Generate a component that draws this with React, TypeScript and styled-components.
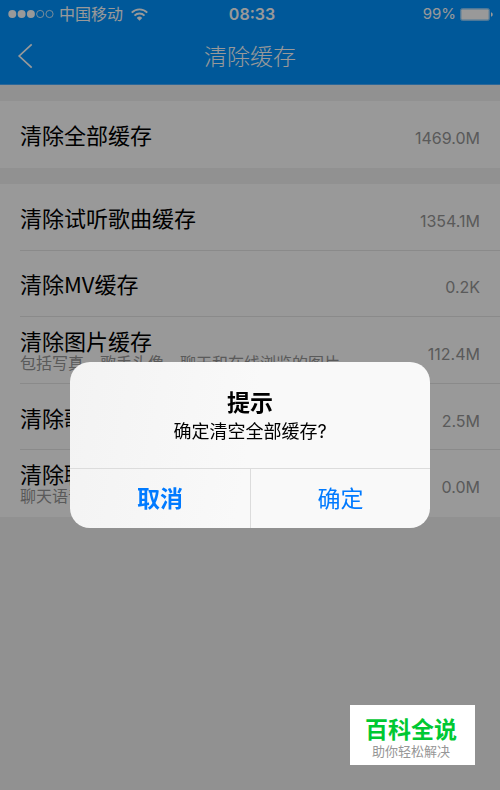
import React from "react";
import styled, { createGlobalStyle } from "styled-components";

const GlobalStyle = createGlobalStyle`
  * { box-sizing: border-box; }
  body {
    margin: 0;
    background: #f2f2f2;
    font-family: Inter, "Noto Sans CJK SC", sans-serif;
    color: #000;
  }
  button { font: inherit; border: 0; background: none; padding: 0; margin: 0; cursor: pointer; }
  h1, h2, p { margin: 0; font-weight: 400; }
`;

const Page = styled.div`
  min-height: 100vh;
`;

const Header = styled.header`
  background: #0093ff;
  color: #fff;
  border-bottom: 1px solid #49acff;
`;

const StatusBar = styled.div`
  display: grid;
  grid-template-columns: 1fr auto 1fr;
  align-items: center;
  height: 28px;
  padding: 0 7px 0 8px;
  font-size: 16px;
  line-height: 28px;
`;

const Carrier = styled.div`
  display: flex;
  align-items: center;
  gap: 5px;
`;

const CarrierName = styled.span`
  margin-right: 3px;
`;

const Clock = styled.time`
  padding-left: 3px;
  font-weight: 600;
  font-size: 16px;
`;

const Power = styled.div`
  display: flex;
  align-items: center;
  justify-content: flex-end;
  gap: 4px;
  font-size: 15px;
`;

const NavBar = styled.div`
  display: grid;
  grid-template-columns: 50px 1fr 50px;
  align-items: center;
  height: 56px;
`;

const BackButton = styled.button`
  display: flex;
  align-items: center;
  height: 56px;
  padding-left: 17px;
  color: inherit;
`;

const NavTitle = styled.h1`
  padding-top: 2px;
  font-size: 23px;
  line-height: 54px;
  font-weight: 300;
  text-align: center;
`;

const Content = styled.main`
  display: grid;
  gap: 16px;
  padding-top: 16px;
`;

const Group = styled.div<{ $minHeight: number }>`
  display: grid;
  grid-auto-rows: 1fr;
  min-height: ${(p) => p.$minHeight}px;
  background: #fff;
`;

const Row = styled.button`
  display: flex;
  padding-left: 20px;
  text-align: left;
  color: inherit;
`;

const RowBody = styled.span<{ $divided: boolean }>`
  flex: 1;
  display: flex;
  align-items: center;
  justify-content: space-between;
  padding-right: 20px;
  border-bottom: 1px solid ${(p) => (p.$divided ? "#e6e6e6" : "transparent")};
`;

const RowText = styled.span`
  display: grid;
`;

const Label = styled.span`
  font-family: "Noto Sans CJK SC", sans-serif;
  font-size: 22px;
  line-height: 26px;
`;

const Hint = styled.span`
  font-size: 16px;
  line-height: 20px;
  color: #969696;
`;

const Size = styled.span`
  padding-top: 8px;
  font-size: 16px;
  line-height: 20px;
  color: #969696;
`;

const Overlay = styled.div`
  position: fixed;
  inset: 0;
  display: flex;
  align-items: center;
  justify-content: center;
  padding: 100px 24px 0;
  background: rgba(0, 0, 0, 0.4);
`;

const Dialog = styled.section`
  width: 100%;
  max-width: 360px;
  overflow: hidden;
  border-radius: 20px;
  background: linear-gradient(100deg, #f3f3f3, #f9f9f9 50%);
`;

const DialogText = styled.div`
  padding: 26px 20px 22px;
  text-align: center;
`;

const DialogTitle = styled.h2`
  font-size: 23px;
  line-height: 30px;
  font-weight: 700;
`;

const DialogMessage = styled.p`
  font-size: 18px;
  line-height: 28px;
`;

const Actions = styled.div`
  display: grid;
  grid-template-columns: 1fr 1fr;
  border-top: 1px solid #dcdcdc;
`;

const Action = styled.button<{ $strong?: boolean }>`
  && {
    height: 59px;
    padding-top: 2px;
    color: #007aff;
    font-size: 23px;
    line-height: 57px;
    font-weight: ${(p) => (p.$strong ? 700 : 400)};
  }
  & + & {
    border-left: 1px solid #dcdcdc;
  }
`;

const Badge = styled.aside`
  position: fixed;
  right: 25px;
  bottom: 25px;
  width: 125px;
  padding: 12px 3px 6px 0;
  background: #fff;
  text-align: center;
`;

const BadgeName = styled.p`
  font-size: 23px;
  line-height: 26px;
  font-weight: 700;
  color: #00c832;
`;

const BadgeSlogan = styled.p`
  font-size: 13px;
  line-height: 16px;
  color: #969696;
`;

const SignalDots = () => (
  <svg width="46" height="10" viewBox="0 0 46 10" aria-hidden="true">
    {[4.3, 13.6, 22.9].map((x) => (
      <circle key={x} cx={x} cy="5" r="4" fill="#fff" />
    ))}
    {[32.2, 41.5].map((x) => (
      <circle key={x} cx={x} cy="5" r="3.6" fill="none" stroke="#fff" strokeWidth="0.8" />
    ))}
  </svg>
);

const WifiIcon = () => (
  <svg width="17" height="13" viewBox="0 0 16 12" fill="none" stroke="#fff" strokeWidth="1.8" aria-hidden="true">
    <path d="M0.7 4.2a10.3 10.3 0 0 1 14.6 0" />
    <path d="M3.3 7a6.6 6.6 0 0 1 9.4 0" />
    <path d="M8 11.8 5.4 9.2a3.7 3.7 0 0 1 5.2 0Z" fill="#fff" stroke="none" />
  </svg>
);

const BatteryIcon = () => (
  <svg width="33" height="13" viewBox="0 0 33 13" aria-hidden="true">
    <rect x="0.5" y="0.5" width="29" height="12" rx="2" fill="none" stroke="#fff" strokeOpacity="0.5" />
    <rect x="1.2" y="1.2" width="27.6" height="10.6" rx="1" fill="#fff" />
    <path d="M31 4.3c1.4.5 1.7 1.3 1.7 2.2s-.3 1.7-1.7 2.2Z" fill="#fff" />
  </svg>
);

const BackIcon = () => (
  <svg width="16" height="26" viewBox="0 0 16 26" fill="none" stroke="#fff" strokeWidth="1.7" aria-hidden="true">
    <path d="M14.7 1.3 2.2 13 14.7 24.7" />
  </svg>
);

type CacheItem = { label: string; size: string; hint?: string };

const groups: CacheItem[][] = [
  [{ label: "清除全部缓存", size: "1469.0M" }],
  [
    { label: "清除试听歌曲缓存", size: "1354.1M" },
    { label: "清除MV缓存", size: "0.2K" },
    { label: "清除图片缓存", size: "112.4M", hint: "包括写真、歌手头像、聊天和在线浏览的图片" },
    { label: "清除歌词缓存", size: "2.5M" },
    { label: "清除聊天缓存", size: "0.0M", hint: "聊天语音缓存" },
  ],
];

export default function App() {
  return (
    <Page>
      <GlobalStyle />
      <Header>
        <StatusBar>
          <Carrier>
            <SignalDots />
            <CarrierName>中国移动</CarrierName>
            <WifiIcon />
          </Carrier>
          <Clock>08:33</Clock>
          <Power>
            <span>99%</span>
            <BatteryIcon />
          </Power>
        </StatusBar>
        <NavBar>
          <BackButton aria-label="返回">
            <BackIcon />
          </BackButton>
          <NavTitle>清除缓存</NavTitle>
        </NavBar>
      </Header>
      <Content>
        {groups.map((items) => (
          <Group key={items[0].label} $minHeight={items.length > 1 ? 333 : 67}>
            {items.map((item, i) => (
              <Row key={item.label}>
                <RowBody $divided={i < items.length - 1}>
                  <RowText>
                    <Label>{item.label}</Label>
                    {item.hint && <Hint>{item.hint}</Hint>}
                  </RowText>
                  <Size>{item.size}</Size>
                </RowBody>
              </Row>
            ))}
          </Group>
        ))}
      </Content>
      <Overlay>
        <Dialog role="alertdialog" aria-modal="true" aria-labelledby="dialog-title" aria-describedby="dialog-message">
          <DialogText>
            <DialogTitle id="dialog-title">提示</DialogTitle>
            <DialogMessage id="dialog-message">确定清空全部缓存?</DialogMessage>
          </DialogText>
          <Actions>
            <Action $strong>取消</Action>
            <Action>确定</Action>
          </Actions>
        </Dialog>
      </Overlay>
      <Badge>
        <BadgeName>百科全说</BadgeName>
        <BadgeSlogan>助你轻松解决</BadgeSlogan>
      </Badge>
    </Page>
  );
}
